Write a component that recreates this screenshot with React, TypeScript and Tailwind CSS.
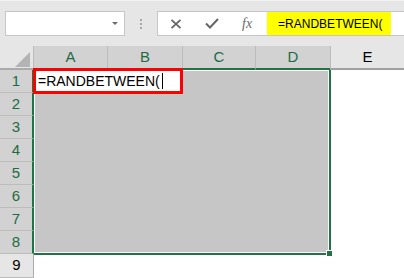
import React from 'react';

const cols = [
  { label: 'A', w: 'w-[74px]', sel: true },
  { label: 'B', w: 'w-[75px]', sel: true },
  { label: 'C', w: 'w-[73px]', sel: true },
  { label: 'D', w: 'w-[75px]', sel: true },
  { label: 'E', w: 'w-[74px]', sel: false },
];

const rows = [1, 2, 3, 4, 5, 6, 7, 8];

const App: React.FC = () => {
  return (
    <div className="relative w-[404px] h-[278px] overflow-hidden bg-white font-['Liberation_Sans',Arial,sans-serif]">
      {/* formula bar */}
      <div className="h-[46px] bg-[#e6e6e6] flex items-start pt-[10px] border-t border-[#f3f3f3]">
        <div className="ml-[5px] w-[120px] h-[25px] bg-white border border-[#c6c6c6] flex items-center justify-end pr-[6px]">
          <div className="w-0 h-0 border-l-[3px] border-r-[3px] border-t-[3px] border-l-transparent border-r-transparent border-t-[#6b6b6b]" />
        </div>
        <div className="w-[32px] h-[25px] flex flex-col items-center justify-center gap-[2px]">
          <div className="w-[2px] h-[2px] bg-[#a6a6a6]" />
          <div className="w-[2px] h-[2px] bg-[#a6a6a6]" />
          <div className="w-[2px] h-[2px] bg-[#a6a6a6]" />
        </div>
        <div className="flex-1 h-[25px] bg-white border-y border-l border-[#c6c6c6] flex items-center">
          <svg width="12" height="10" viewBox="0 0 12 10" className="ml-[12px]">
            <path d="M1.5 0.8 L10.5 9.2 M10.5 0.8 L1.5 9.2" stroke="#666" strokeWidth="1.8" fill="none" />
          </svg>
          <svg width="14" height="11" viewBox="0 0 14 11" className="ml-[23px]">
            <path d="M1 5.5 L5 9.5 L13 1" stroke="#666" strokeWidth="2" fill="none" />
          </svg>
          <span className="ml-[23px] font-['Liberation_Serif',serif] italic text-[14px] text-[#6b6b6b] leading-none">fx</span>
          <div className="ml-[15px] w-[124px] h-[23px] bg-[#ffff00] flex items-center pl-[11px] text-[12px] text-black">
            =RANDBETWEEN(
          </div>
        </div>
      </div>

      {/* column headers */}
      <div className="flex h-[24px]">
        <div className="w-[33px] h-full bg-[#e6e6e6] border-b-2 border-[#ababab] flex items-end justify-end pr-[3px] pb-[1px]">
          <svg width="15" height="15" viewBox="0 0 15 15">
            <path d="M15 0 L15 15 L0 15 Z" fill="#b4b4b4" />
          </svg>
        </div>
        {cols.map((c) => (
          <div
            key={c.label}
            className={`${c.w} h-full flex items-center justify-center text-[15px] border-l ${
              c.sel
                ? 'bg-[#d2d2d2] border-[#bcbcbc] border-b-2 border-b-[#217346] text-[#1d6b45]'
                : 'bg-[#e6e6e6] border-[#bcbcbc] border-b-2 border-b-[#a0a0a0] text-black'
            }`}
          >
            {c.label}
          </div>
        ))}
      </div>

      {/* body */}
      <div className="flex">
        <div className="w-[34px] flex flex-col">
          {rows.map((r) => (
            <div
              key={r}
              className="h-[23px] bg-[#d2d2d2] border-r-2 border-[#217346] border-b border-b-[#bcbcbc] flex items-center justify-center text-[15px] text-[#1d6b45]"
            >
              {r}
            </div>
          ))}
          <div className="h-[24px] bg-[#e6e6e6] border-r border-[#ababab] border-b border-b-[#bcbcbc] flex items-center justify-center text-[15px] text-black">
            9
          </div>
        </div>
        <div className="flex flex-col">
          <div className="relative w-[297px] h-[185px] border-r-2 border-b-2 border-[#217346]">
            <div className="w-full h-full border border-white bg-[#c6c6c6]" />
            <div className="absolute right-[-4px] bottom-[-4px] w-[7px] h-[7px] bg-[#217346] border border-white" />
          </div>
        </div>
      </div>

      {/* highlighted active cell */}
      <div className="absolute left-[33px] top-[68px] w-[150px] h-[26px] border-[3px] border-[#ff0000] bg-white flex items-center pl-[2px] text-[14px] text-black">
        <span>=RANDBETWEEN(</span>
        <span className="ml-[2px] w-px h-[16px] bg-black" />
      </div>
    </div>
  );
};

export default App;
